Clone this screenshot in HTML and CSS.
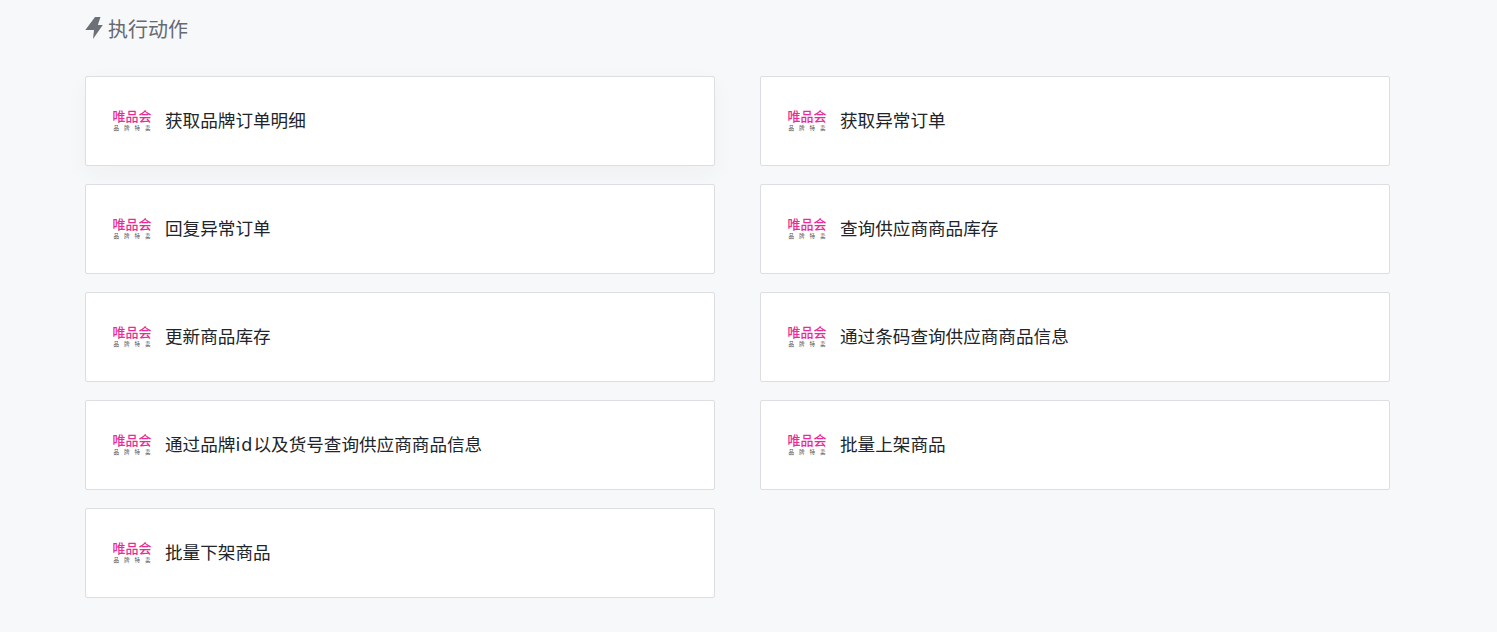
FILE: index.html
```html
<!DOCTYPE html>
<html lang="zh">
<head>
<meta charset="utf-8">
<title>执行动作</title>
<link rel="stylesheet" href="styles.css">
</head>
<body>
<main class="page">
  <h2 class="title">
    <svg class="bolt" viewBox="0 0 18 22" aria-hidden="true"><path d="M10 0 H15.500 L12.800 8 H17.800 L8 22 L9 13 H0.300 Z"/></svg>
    <span>执行动作</span>
  </h2>
  <div class="grid">
    <a class="card hovered"><span class="logo"><b>唯品会</b><i>品牌特卖</i></span><span class="name">获取品牌订单明细</span></a>
    <a class="card"><span class="logo"><b>唯品会</b><i>品牌特卖</i></span><span class="name">获取异常订单</span></a>
    <a class="card"><span class="logo"><b>唯品会</b><i>品牌特卖</i></span><span class="name">回复异常订单</span></a>
    <a class="card"><span class="logo"><b>唯品会</b><i>品牌特卖</i></span><span class="name">查询供应商商品库存</span></a>
    <a class="card"><span class="logo"><b>唯品会</b><i>品牌特卖</i></span><span class="name">更新商品库存</span></a>
    <a class="card"><span class="logo"><b>唯品会</b><i>品牌特卖</i></span><span class="name">通过条码查询供应商商品信息</span></a>
    <a class="card"><span class="logo"><b>唯品会</b><i>品牌特卖</i></span><span class="name">通过品牌<em>id</em>以及货号查询供应商商品信息</span></a>
    <a class="card"><span class="logo"><b>唯品会</b><i>品牌特卖</i></span><span class="name">批量上架商品</span></a>
    <a class="card"><span class="logo"><b>唯品会</b><i>品牌特卖</i></span><span class="name">批量下架商品</span></a>
  </div>
</main>
</body>
</html>
```
FILE: styles.css
```css
* { box-sizing: border-box; }
html, body { margin: 0; height: 100%; overflow: hidden; }
body {
  background: #f7f8fa;
  font-family: "DejaVu Sans", "Noto Sans CJK SC", sans-serif;
  color: #212529;
}
.page { padding: 13px 107px 0 85px; }
.title {
  display: flex;
  align-items: center;
  gap: 5px;
  margin: 0 0 33px;
  height: 30px;
  font-size: 20px;
  font-weight: 400;
  color: #666a70;
}
.bolt { width: 18px; height: 22px; fill: #6c7077; flex: none; }
.grid {
  display: grid;
  grid-template-columns: 630px 630px;
  column-gap: 45px;
  row-gap: 18px;
}
.card {
  display: flex;
  align-items: center;
  height: 90px;
  padding-left: 27px;
  background: #fff;
  border: 1px solid #dcdee2;
  border-radius: 2px;
}
.hovered { box-shadow: 0 8px 24px rgba(30, 40, 60, 0.04); }
.logo {
  display: flex;
  flex-direction: column;
  align-items: center;
  gap: 2px;
  width: 38px;
  margin-right: 14px;
  flex: none;
}
.logo b {
  font-size: 13px;
  line-height: 12px;
  font-weight: 500;
  color: #ec2a96;
  white-space: nowrap;
}
.logo i {
  font-size: 5.500px;
  line-height: 6px;
  letter-spacing: 5px;
  margin-right: -5px;
  font-style: normal;
  color: #4a4a4a;
  white-space: nowrap;
}
.name { font-size: 17.6px; line-height: 24px; color: #212529; }
.name em { font-style: normal; letter-spacing: 1px; }
```
